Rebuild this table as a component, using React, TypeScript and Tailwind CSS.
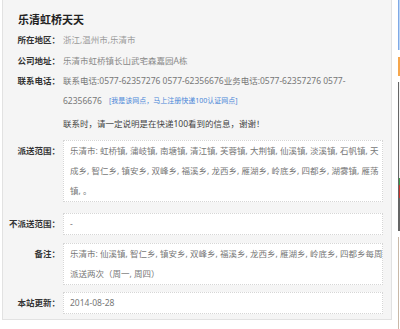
const font = { fontFamily: '"Noto Sans", "Noto Sans CJK SC", sans-serif' };

const boxRows = [
  {
    label: "派送范围：",
    lines: [
      "乐清市: 虹桥镇, 蒲岐镇, 南塘镇, 清江镇, 芙蓉镇, 大荆镇, 仙溪镇, 淡溪镇, 石帆镇, 天",
      "成乡, 智仁乡, 镇安乡, 双峰乡, 福溪乡, 龙西乡, 雁湖乡, 岭底乡, 四都乡, 湖雾镇, 雁荡",
      "镇, 。",
    ],
    mt: "mt-[6px]",
  },
  { label: "不派送范围：", lines: ["-"], mt: "mt-[11px]" },
  {
    label: "备注：",
    lines: [
      "乐清市: 仙溪镇, 智仁乡, 镇安乡, 双峰乡, 福溪乡, 龙西乡, 雁湖乡, 岭底乡, 四都乡每周",
      "派送两次（周一, 周四）",
    ],
    mt: "mt-[8px]",
  },
  { label: "本站更新：", lines: ["2014-08-28"], mt: "mt-[7px]" },
];

const Label = ({ text }: { text: string }) => (
  <div className="w-[54px] shrink-0 text-right font-bold text-[#333] leading-[20px] whitespace-nowrap">
    {text}
  </div>
);

export default function App() {
  return (
    <div className="w-[400px] h-[329px] bg-white flex overflow-hidden text-[8.5px]" style={font}>
      {/* Main info panel */}
      <div className="ml-[2px] w-[390px] h-[320px] shrink-0 bg-[#f5f5f5] border border-t-0 border-[#e2e2e2] pl-[3px] pr-[7px]">
        <h1 className="pl-[12px] pt-[10px] text-[11px] font-bold leading-[20px] text-[#222]">
          乐清虹桥天天
        </h1>

        <div className="flex gap-[3px]">
          <Label text="所在地区：" />
          <div className="leading-[20px] text-[#999]">浙江,温州市,乐清市</div>
        </div>

        <div className="mt-[1px] flex gap-[3px]">
          <Label text="公司地址：" />
          <div className="leading-[20px] text-[#888]">乐清市虹桥镇长山武宅森嘉园A栋</div>
        </div>

        <div className="flex gap-[3px]">
          <Label text="联系电话：" />
          <div className="leading-[20px] text-[#777]">
            <div className="whitespace-nowrap">
              联系电话:0577-62357276 0577-62356676业务电话:0577-62357276 0577-
            </div>
            <div className="flex items-center whitespace-nowrap">
              <span>62356676</span>
              <span className="ml-[7px] text-[7px] text-[#4a86d8]">
                [我是该网点，马上注册快递100认证网点]
              </span>
            </div>
            <div className="mt-[3px] text-[#444] whitespace-nowrap">
              联系时，请一定说明是在快递100看到的信息，谢谢！
            </div>
          </div>
        </div>

        {boxRows.map((row) => (
          <div key={row.label} className={`flex gap-[3px] ${row.mt}`}>
            <div className="pt-[1px]">
              <Label text={row.label} />
            </div>
            <div className="w-[320px] bg-white border border-dotted border-[#d6d6d6] pl-[6px] text-[#777] leading-[20px]">
              {row.lines.map((line) => (
                <div key={line} className="whitespace-nowrap">
                  {line}
                </div>
              ))}
            </div>
          </div>
        ))}
      </div>

      {/* Sidebar edge */}
      <div className="ml-[6px] w-[4px] shrink-0 flex flex-col">
        <div className="h-[50px] bg-[#bcd6f6] border-l border-[#7fa9e6]" />
        <div className="mt-[7px] h-[19px] bg-[#f6a64c]" />
        <div className="mt-[6px] h-[149px] border-l border-[#666] bg-[#8a8a8a] flex flex-col">
          <div className="h-[96px] bg-[#f2f2f2]" />
          <div className="h-[7px] bg-[#3e9a4a]" />
          <div className="h-[13px] bg-[#c8362e]" />
          <div className="flex-1 bg-[#666]" />
        </div>
        <div className="mt-[6px] flex-1 border-l border-[#c9b9a8] bg-white" />
      </div>
    </div>
  );
}
